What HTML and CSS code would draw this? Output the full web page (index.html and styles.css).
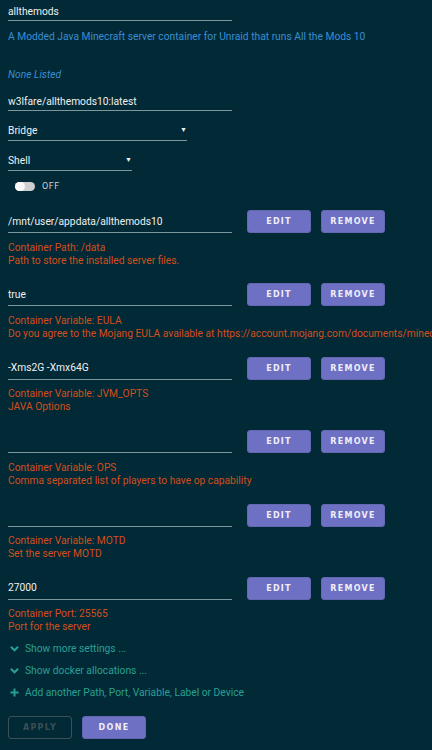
FILE: index.html
```html
<!DOCTYPE html>
<html lang="en">
<head>
    <meta charset="UTF-8">
    <title>Update Container</title>
    <link rel="stylesheet" href="styles.css">
</head>
<body>

<div class="form">
    <div class="field"><span class="input">allthemods</span></div>
    <p class="desc">A Modded Java Minecraft server container for Unraid that runs All the Mods 10</p>
    <p class="none">None Listed</p>
    <div class="field repo"><span class="input">w3lfare/allthemods10:latest</span></div>
    <div class="field select wide"><span class="input">Bridge</span><span class="caret">&#9660;</span></div>
    <div class="field select narrow"><span class="input">Shell</span><span class="caret">&#9660;</span></div>
    <div class="toggle"><span class="switch"><span class="knob"></span></span><span class="off">OFF</span></div>

    <div class="config">
        <div class="row">
            <div class="field"><span class="input">/mnt/user/appdata/allthemods10</span></div>
            <button class="btn">EDIT</button>
            <button class="btn">REMOVE</button>
        </div>
        <p class="note">Container Path: /data<br>Path to store the installed server files.</p>
    </div>

    <div class="config">
        <div class="row">
            <div class="field"><span class="input">true</span></div>
            <button class="btn">EDIT</button>
            <button class="btn">REMOVE</button>
        </div>
        <p class="note">Container Variable: EULA<br>Do you agree to the Mojang EULA available at https://account.mojang.com/documents/minecraft_eula</p>
    </div>

    <div class="config">
        <div class="row">
            <div class="field"><span class="input">-Xms2G -Xmx64G</span></div>
            <button class="btn">EDIT</button>
            <button class="btn">REMOVE</button>
        </div>
        <p class="note">Container Variable: JVM_OPTS<br>JAVA Options</p>
    </div>

    <div class="config">
        <div class="row">
            <div class="field"><span class="input"></span></div>
            <button class="btn">EDIT</button>
            <button class="btn">REMOVE</button>
        </div>
        <p class="note">Container Variable: OPS<br>Comma separated list of players to have op capability</p>
    </div>

    <div class="config">
        <div class="row">
            <div class="field"><span class="input"></span></div>
            <button class="btn">EDIT</button>
            <button class="btn">REMOVE</button>
        </div>
        <p class="note">Container Variable: MOTD<br>Set the server MOTD</p>
    </div>

    <div class="config">
        <div class="row">
            <div class="field"><span class="input">27000</span></div>
            <button class="btn">EDIT</button>
            <button class="btn">REMOVE</button>
        </div>
        <p class="note">Container Port: 25565<br>Port for the server</p>
    </div>

    <ul class="links">
        <li><svg viewBox="0 0 10 10" width="9" height="9"><path d="M1 3 L5 7 L9 3" fill="none" stroke="currentColor" stroke-width="2.2"/></svg>Show more settings ...</li>
        <li><svg viewBox="0 0 10 10" width="9" height="9"><path d="M1 3 L5 7 L9 3" fill="none" stroke="currentColor" stroke-width="2.2"/></svg>Show docker allocations ...</li>
        <li><svg viewBox="0 0 10 10" width="9" height="9"><path d="M5 0.5 V9.5 M0.5 5 H9.5" fill="none" stroke="currentColor" stroke-width="2.2"/></svg>Add another Path, Port, Variable, Label or Device</li>
    </ul>

    <div class="actions">
        <button class="btn ghost">APPLY</button>
        <button class="btn">DONE</button>
    </div>
</div>

</body>
</html>
```

FILE: styles.css
```css
html, body {
    margin: 0;
    padding: 0;
    background: #022936;
    overflow: hidden;
}
body {
    font-family: Roboto, "Liberation Sans", sans-serif;
    font-size: 10.25px;
    line-height: 13px;
    color: #e6e6e6;
}
.form {
    padding: 3px 8px 0;
    width: 600px;
}
p {
    margin: 0;
}
.field {
    display: flex;
    align-items: center;
    width: 224px;
    height: 17px;
    border-bottom: 1px solid #7d979c;
}
.input {
    flex: 1;
    white-space: nowrap;
    color: #f0f0f0;
}
.desc {
    margin-top: 9px;
    color: #3b8ed2;
}
.none {
    margin-top: 25px;
    color: #3b8ed2;
    font-style: italic;
}
.repo {
    margin-top: 12px;
}
.select {
    margin-top: 10px;
    height: 19px;
}
.select.wide {
    width: 179px;
}
.select.narrow {
    width: 124px;
}
.caret {
    font-size: 7px;
    color: #eee;
    margin-right: 0;
}
.toggle {
    display: flex;
    align-items: center;
    margin: 9px 0 0 7px;
    height: 12px;
}
.switch {
    display: inline-block;
    width: 20px;
    height: 9px;
    border-radius: 5px;
    background: #cfcfcf;
    position: relative;
}
.knob {
    position: absolute;
    left: 0;
    top: 0;
    width: 10px;
    height: 9px;
    border-radius: 5px;
    background: #fafafa;
}
.off {
    margin-left: 7px;
    font-size: 9px;
    color: #cfcfcf;
    letter-spacing: 0.5px;
}
.config {
    margin-top: 16.9px;
}
.toggle + .config {
    margin-top: 18px;
}
.row {
    display: flex;
    align-items: flex-end;
    height: 23px;
}
.row .field {
    height: 22px;
    margin-right: 15px;
}
.btn {
    width: 64px;
    height: 23px;
    margin-right: 10px;
    padding: 0;
    border: 1px solid #6468b3;
    border-radius: 3px;
    background: #6d70c3;
    color: #eeeef8;
    font-family: "DejaVu Sans", sans-serif;
    font-size: 8px;
    font-weight: bold;
    letter-spacing: 1.3px;
    text-align: center;
}
.note {
    margin-top: 7.5px;
    color: #d24f1c;
    white-space: nowrap;
}
.links {
    list-style: none;
    margin: 4.5px 0 0 2px;
    padding: 0;
    color: #28a094;
}
.links li {
    display: flex;
    align-items: center;
    height: 22px;
}
.links svg {
    margin-right: 6px;
}
.actions {
    display: flex;
    margin-top: 12px;
}
.btn.ghost {
    background: transparent;
    border-color: #3b5057;
    color: #3b5057;
}
```
